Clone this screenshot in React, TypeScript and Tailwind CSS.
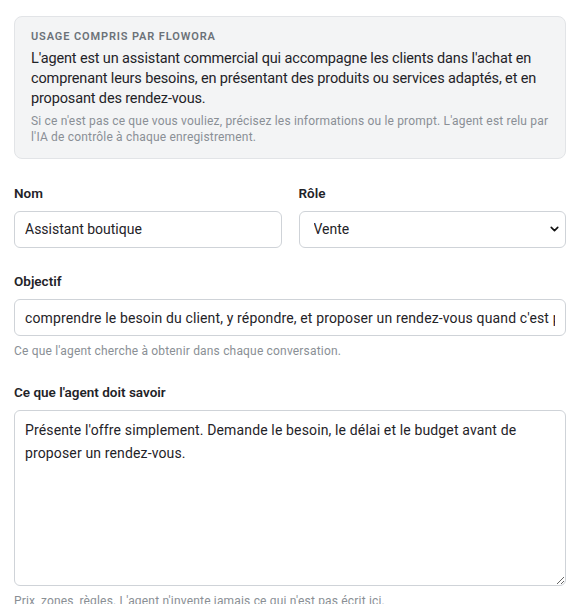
import { ChevronDown } from "lucide-react";

const font = { fontFamily: 'Roboto, "Liberation Sans", sans-serif' };

function Label({ children }: { children: React.ReactNode }) {
  return (
    <label className="block mb-[8px] text-[13.5px] font-semibold text-[#1f2328]">
      {children}
    </label>
  );
}

export default function App() {
  return (
    <div className="min-h-screen bg-white px-[14px] pt-[16px] text-[#1f2328]" style={font}>
      {/* Usage box */}
      <div className="rounded-[8px] border border-[#e2e4e7] bg-[#f3f4f5] px-[16px] pt-[12px] pb-[13px]">
        <div className="text-[11px] font-semibold uppercase tracking-[0.08em] text-[#6b7178]">
          Usage compris par Flowora
        </div>
        <p className="mt-[3px] text-[14.5px] leading-[20px] tracking-[-0.01em] text-[#1f2328]">
          L'agent est un assistant commercial qui accompagne les clients dans l'achat en
          comprenant leurs besoins, en présentant des produits ou services adaptés, et en
          proposant des rendez-vous.
        </p>
        <p className="mt-[4px] text-[12px] leading-[16px] tracking-[0.015em] text-[#8a8f95]">
          Si ce n'est pas ce que vous vouliez, précisez les informations ou le prompt. L'agent est relu par
          l'IA de contrôle à chaque enregistrement.
        </p>
      </div>

      {/* Nom / Rôle */}
      <div className="mt-[24px] grid grid-cols-2 gap-[17px]">
        <div>
          <Label>Nom</Label>
          <input
            defaultValue="Assistant boutique"
            className="h-[37px] w-full rounded-[6px] border border-[#cfd3d8] bg-white px-[10px] text-[14px] text-[#1f2328] outline-none"
            style={font}
          />
        </div>
        <div>
          <Label>Rôle</Label>
          <div className="relative">
            <select
              defaultValue="Vente"
              className="h-[37px] w-full appearance-none rounded-[6px] border border-[#cfd3d8] bg-white px-[14px] text-[14px] text-[#1f2328] outline-none"
              style={font}
            >
              <option>Vente</option>
              <option>Support</option>
            </select>
            <ChevronDown
              className="pointer-events-none absolute right-[5px] top-1/2 h-[13px] w-[13px] -translate-y-1/2 text-[#111]"
              strokeWidth={3}
            />
          </div>
        </div>
      </div>

      {/* Objectif */}
      <div className="mt-[23px]">
        <Label>Objectif</Label>
        <input
          defaultValue="comprendre le besoin du client, y répondre, et proposer un rendez-vous quand c'est pertinent."
          className="h-[37px] w-full rounded-[6px] border border-[#cfd3d8] bg-white px-[10px] text-[14px] tracking-[0.01em] text-[#1f2328] outline-none"
          style={font}
        />
        <p className="mt-[6px] text-[12px] tracking-[0.015em] text-[#8a8f95]">
          Ce que l'agent cherche à obtenir dans chaque conversation.
        </p>
      </div>

      {/* Ce que l'agent doit savoir */}
      <div className="mt-[22px]">
        <Label>Ce que l'agent doit savoir</Label>
        <textarea
          defaultValue="Présente l'offre simplement. Demande le besoin, le délai et le budget avant de proposer un rendez-vous."
          className="block h-[176px] w-full rounded-[6px] border border-[#cfd3d8] bg-white px-[10px] py-[8px] text-[14px] leading-[23px] tracking-[0.01em] text-[#1f2328] outline-none"
          style={font}
        />
        <p className="mt-[6px] text-[12px] tracking-[0.015em] text-[#8a8f95]">
          Prix, zones, règles. L'agent n'invente jamais ce qui n'est pas écrit ici.
        </p>
      </div>
    </div>
  );
}
